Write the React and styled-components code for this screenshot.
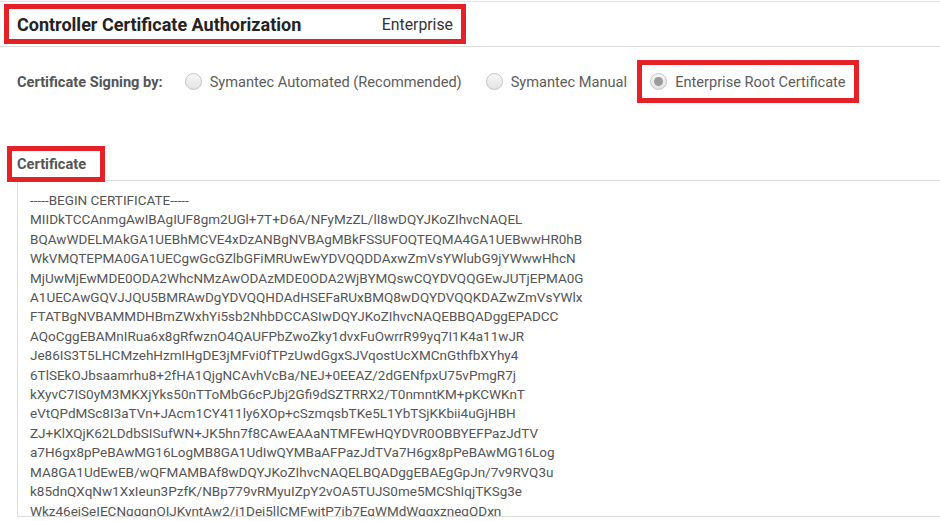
import React from "react";
import styled, { createGlobalStyle } from "styled-components";

const GlobalStyle = createGlobalStyle`
  body {
    margin: 0;
    background: #fff;
    font-family: Roboto, "Liberation Sans", sans-serif;
    overflow: hidden;
  }
  * { box-sizing: border-box; }
`;

const Page = styled.div`
  margin-top: 1px;
  border-top: 1px solid #e2e2e2;
`;

const Header = styled.div`
  display: flex;
  align-items: center;
  height: 45px;
  padding-left: 4px;
  border-bottom: 1px solid #dcdcdc;
`;

const Highlight = styled.div`
  display: flex;
  align-items: center;
  justify-content: ${(p) => p.$justify || "flex-start"};
  border: 5px solid #e52128;
  width: ${(p) => p.$width || "auto"};
  height: ${(p) => p.$height};
  padding: ${(p) => p.$pad};
  background: #fff;
  position: relative;
  z-index: 1;
`;

const Title = styled.h1`
  margin: 0;
  font-size: 18px;
  font-weight: 700;
  color: #222;
`;

const Edition = styled.span`
  font-size: 15.8px;
  color: #333;
`;

const SigningRow = styled.div`
  display: flex;
  align-items: center;
  height: 43px;
  margin-top: 13px;
  padding-left: 17px;
`;

const FieldLabel = styled.span`
  font-size: 14.6px;
  font-weight: 700;
  color: #555;
  margin-right: ${(p) => p.$gap || "0"};
`;

const Option = styled.label`
  display: flex;
  align-items: center;
  gap: 8px;
  font-size: 14.6px;
  color: #5c5c5c;
  margin-right: ${(p) => p.$gap || "0"};
`;

const Radio = styled.span`
  width: 17px;
  height: 17px;
  border-radius: 50%;
  border: 1px solid #c4c4c4;
  background: linear-gradient(#f6f6f6, #e4e4e4);
  display: flex;
  align-items: center;
  justify-content: center;
  &::after {
    content: "";
    display: ${(p) => (p.$checked ? "block" : "none")};
    width: 9px;
    height: 9px;
    border-radius: 50%;
    background: #9b9b9b;
  }
`;

const CertSection = styled.div`
  margin-top: 43px;
`;

const CertHeading = styled.div`
  padding-left: 7px;
  display: flex;
`;

const CertBox = styled.div`
  margin: -2px 0 0 17px;
  width: 940px;
  height: 337px;
  border: 1px solid #dddddd;
  border-right: none;
  padding: 10px 0 0 12px;
  overflow: hidden;
  font-size: 13.5px;
  line-height: 19.4px;
  color: #555;
  white-space: pre;
`;

const certLines = [
  "-----BEGIN CERTIFICATE-----",
  "MIIDkTCCAnmgAwIBAgIUF8gm2UGl+7T+D6A/NFyMzZL/lI8wDQYJKoZIhvcNAQEL",
  "BQAwWDELMAkGA1UEBhMCVE4xDzANBgNVBAgMBkFSSUFOQTEQMA4GA1UEBwwHR0hB",
  "WkVMQTEPMA0GA1UECgwGcGZlbGFiMRUwEwYDVQQDDAxwZmVsYWlubG9jYWwwHhcN",
  "MjUwMjEwMDE0ODA2WhcNMzAwODAzMDE0ODA2WjBYMQswCQYDVQQGEwJUTjEPMA0G",
  "A1UECAwGQVJJQU5BMRAwDgYDVQQHDAdHSEFaRUxBMQ8wDQYDVQQKDAZwZmVsYWlx",
  "FTATBgNVBAMMDHBmZWxhYi5sb2NhbDCCASIwDQYJKoZIhvcNAQEBBQADggEPADCC",
  "AQoCggEBAMnIRua6x8gRfwznO4QAUFPbZwoZky1dvxFuOwrrR99yq7I1K4a11wJR",
  "Je86IS3T5LHCMzehHzmIHgDE3jMFvi0fTPzUwdGgxSJVqostUcXMCnGthfbXYhy4",
  "6TlSEkOJbsaamrhu8+2fHA1QjgNCAvhVcBa/NEJ+0EEAZ/2dGENfpxU75vPmgR7j",
  "kXyvC7IS0yM3MKXjYks50nTToMbG6cPJbj2Gfi9dSZTRRX2/T0nmntKM+pKCWKnT",
  "eVtQPdMSc8I3aTVn+JAcm1CY411ly6XOp+cSzmqsbTKe5L1YbTSjKKbii4uGjHBH",
  "ZJ+KlXQjK62LDdbSISufWN+JK5hn7f8CAwEAAaNTMFEwHQYDVR0OBBYEFPazJdTV",
  "a7H6gx8pPeBAwMG16LogMB8GA1UdIwQYMBaAFPazJdTVa7H6gx8pPeBAwMG16Log",
  "MA8GA1UdEwEB/wQFMAMBAf8wDQYJKoZIhvcNAQELBQADggEBAEgGpJn/7v9RVQ3u",
  "k85dnQXqNw1XxIeun3PzfK/NBp779vRMyuIZpY2vOA5TUJS0me5MCShIqjTKSg3e",
  "Wkz46ejSeIECNqqgnOIJKyntAw2/i1Dej5llCMFwitP7jb7EgWMdWgqxzneqQDxn",
];

export default function App() {
  return (
    <>
      <GlobalStyle />
      <Page>
        <Header>
          <Highlight $width="462px" $height="40px" $pad="0 8px" $justify="space-between">
            <Title>Controller Certificate Authorization</Title>
            <Edition>Enterprise</Edition>
          </Highlight>
        </Header>

        <SigningRow>
          <FieldLabel $gap="22px">Certificate Signing by:</FieldLabel>
          <Option $gap="24px">
            <Radio />
            Symantec Automated (Recommended)
          </Option>
          <Option $gap="10px">
            <Radio />
            Symantec Manual
          </Option>
          <Highlight $height="43px" $pad="0 8px">
            <Option>
              <Radio $checked />
              Enterprise Root Certificate
            </Option>
          </Highlight>
        </SigningRow>

        <CertSection>
          <CertHeading>
            <Highlight $height="36px" $pad="0 14px 0 5px">
              <FieldLabel>Certificate</FieldLabel>
            </Highlight>
          </CertHeading>
          <CertBox>{certLines.join("\n")}</CertBox>
        </CertSection>
      </Page>
    </>
  );
}
